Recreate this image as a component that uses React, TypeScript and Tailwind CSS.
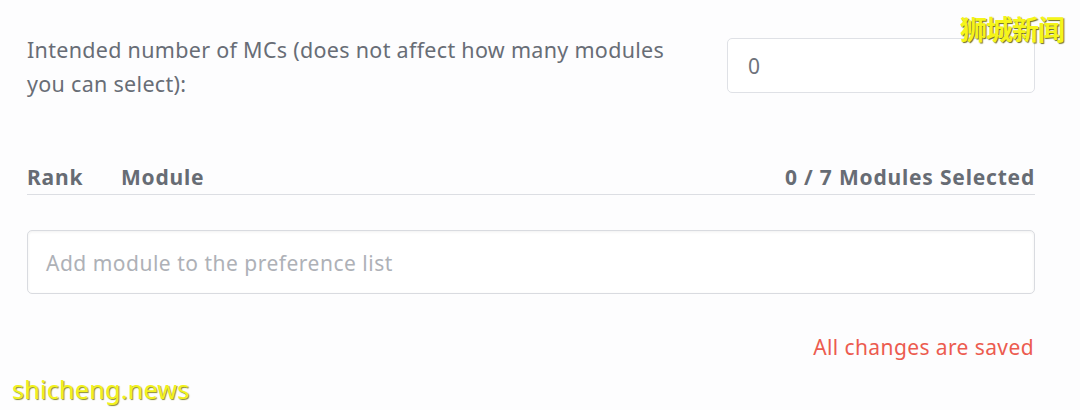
export default function App() {
  return (
    <div
      className="relative h-[410px] w-[1080px] overflow-hidden bg-[#fdfdfe] text-[#686d76]"
      style={{ fontFamily: '"Noto Sans", "Open Sans", sans-serif' }}
    >
      <div className="flex flex-col pl-[27px] pr-[45px] pt-[33px]">
        <div className="flex items-start justify-between">
          <p className="w-[680px] text-[21.5px] leading-[34px] tracking-[0.3px]">
            Intended number of MCs (does not affect how many modules you can select):
          </p>
          <div className="mt-[5px] flex h-[55px] w-[308px] items-center rounded-[5px] border border-[#dfe1e6] bg-white px-[20px] pt-[2px] text-[21px] text-[#6e737b]">
            0
          </div>
        </div>

        <div className="mt-[61px] flex items-center border-b border-[#dcdee3] text-[21px] font-bold tracking-[0.8px] text-[#676c74]">
          <span className="w-[94px]">Rank</span>
          <span>Module</span>
          <span className="ml-auto">0 / 7 Modules Selected</span>
        </div>

        <div className="mt-[35px] flex h-[64px] items-center rounded-[5px] border border-[#d9dbe0] bg-white px-[18px] pt-[4px] text-[21px] tracking-[0.5px] text-[#aeb1b7] shadow-[inset_0_1px_3px_rgba(0,0,0,0.06)]">
          Add module to the preference list
        </div>

        <p className="mt-[38px] self-end pr-[1px] text-[21px] tracking-[0.4px] text-[#ec5b4f]">All changes are saved</p>
      </div>

      <span
        className="absolute right-[16px] top-[15px] text-[27px] font-bold leading-none tracking-[-1px] text-[#f5f51a] [text-shadow:1px_1px_1px_#6b6b20]"
        style={{ fontFamily: '"Noto Sans CJK SC", sans-serif' }}
      >
        狮城新闻
      </span>
      <span className="absolute bottom-[8px] left-[12px] text-[25px] leading-none tracking-[0.3px] text-[#f2f21c] [text-shadow:1px_1px_1px_#8a8a30]">
        shicheng.news
      </span>
    </div>
  );
}
